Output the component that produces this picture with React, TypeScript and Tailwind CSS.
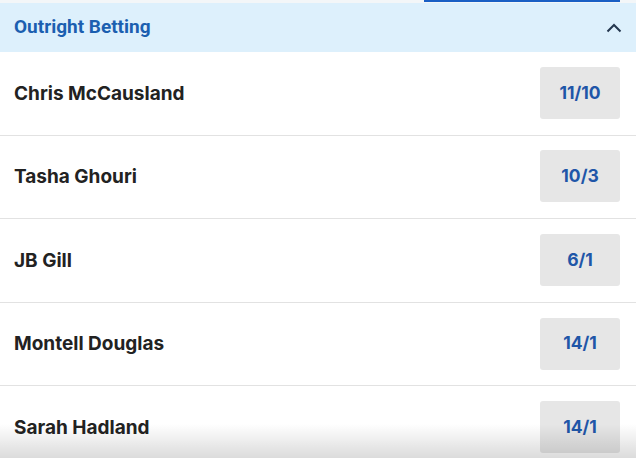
import React from 'react';

const runners = [
  { name: 'Chris McCausland', odds: '11/10' },
  { name: 'Tasha Ghouri', odds: '10/3' },
  { name: 'JB Gill', odds: '6/1' },
  { name: 'Montell Douglas', odds: '14/1' },
  { name: 'Sarah Hadland', odds: '14/1' },
];

export default function App() {
  return (
    <div
      className="relative h-[458px] w-[636px] overflow-hidden bg-white"
      style={{ fontFamily: 'Inter, "Noto Sans", sans-serif' }}
    >
      <div className="flex h-[3px] bg-[#f3f6f8]">
        <div className="ml-[424px] h-[2px] w-[196px] bg-[#1a5fc4]" />
      </div>
      <div className="flex h-[49px] items-center justify-between bg-[#ddf0fc] pl-[14px] pr-[14px]">
        <span
          className="text-[19px] font-bold text-[#1b5fb0]"
          style={{ fontFamily: 'Roboto, Inter, sans-serif' }}
        >
          Outright Betting
        </span>
        <svg width="16" height="10" viewBox="0 0 16 10" fill="none">
          <path d="M1.5 8.5 L8 2 L14.5 8.5" stroke="#24374f" strokeWidth="2" />
        </svg>
      </div>
      <div className="flex flex-col">
        {runners.map((r) => (
          <div
            key={r.name}
            className="flex h-[83.6px] items-center justify-between border-b border-[#e2e2e2] pb-[1px] pl-[14px] pr-[16px]"
          >
            <span className="mt-[2px] text-[19px] font-bold text-[#222222]">{r.name}</span>
            <button className="flex h-[52px] w-[80px] items-center justify-center rounded-[3px] bg-[#e6e6e6] text-[17.5px] font-bold text-[#1f56a8]">
              {r.odds}
            </button>
          </div>
        ))}
      </div>
      <div className="pointer-events-none absolute bottom-0 left-0 h-[34px] w-full bg-gradient-to-b from-transparent to-[#00000024]" />
    </div>
  );
}
